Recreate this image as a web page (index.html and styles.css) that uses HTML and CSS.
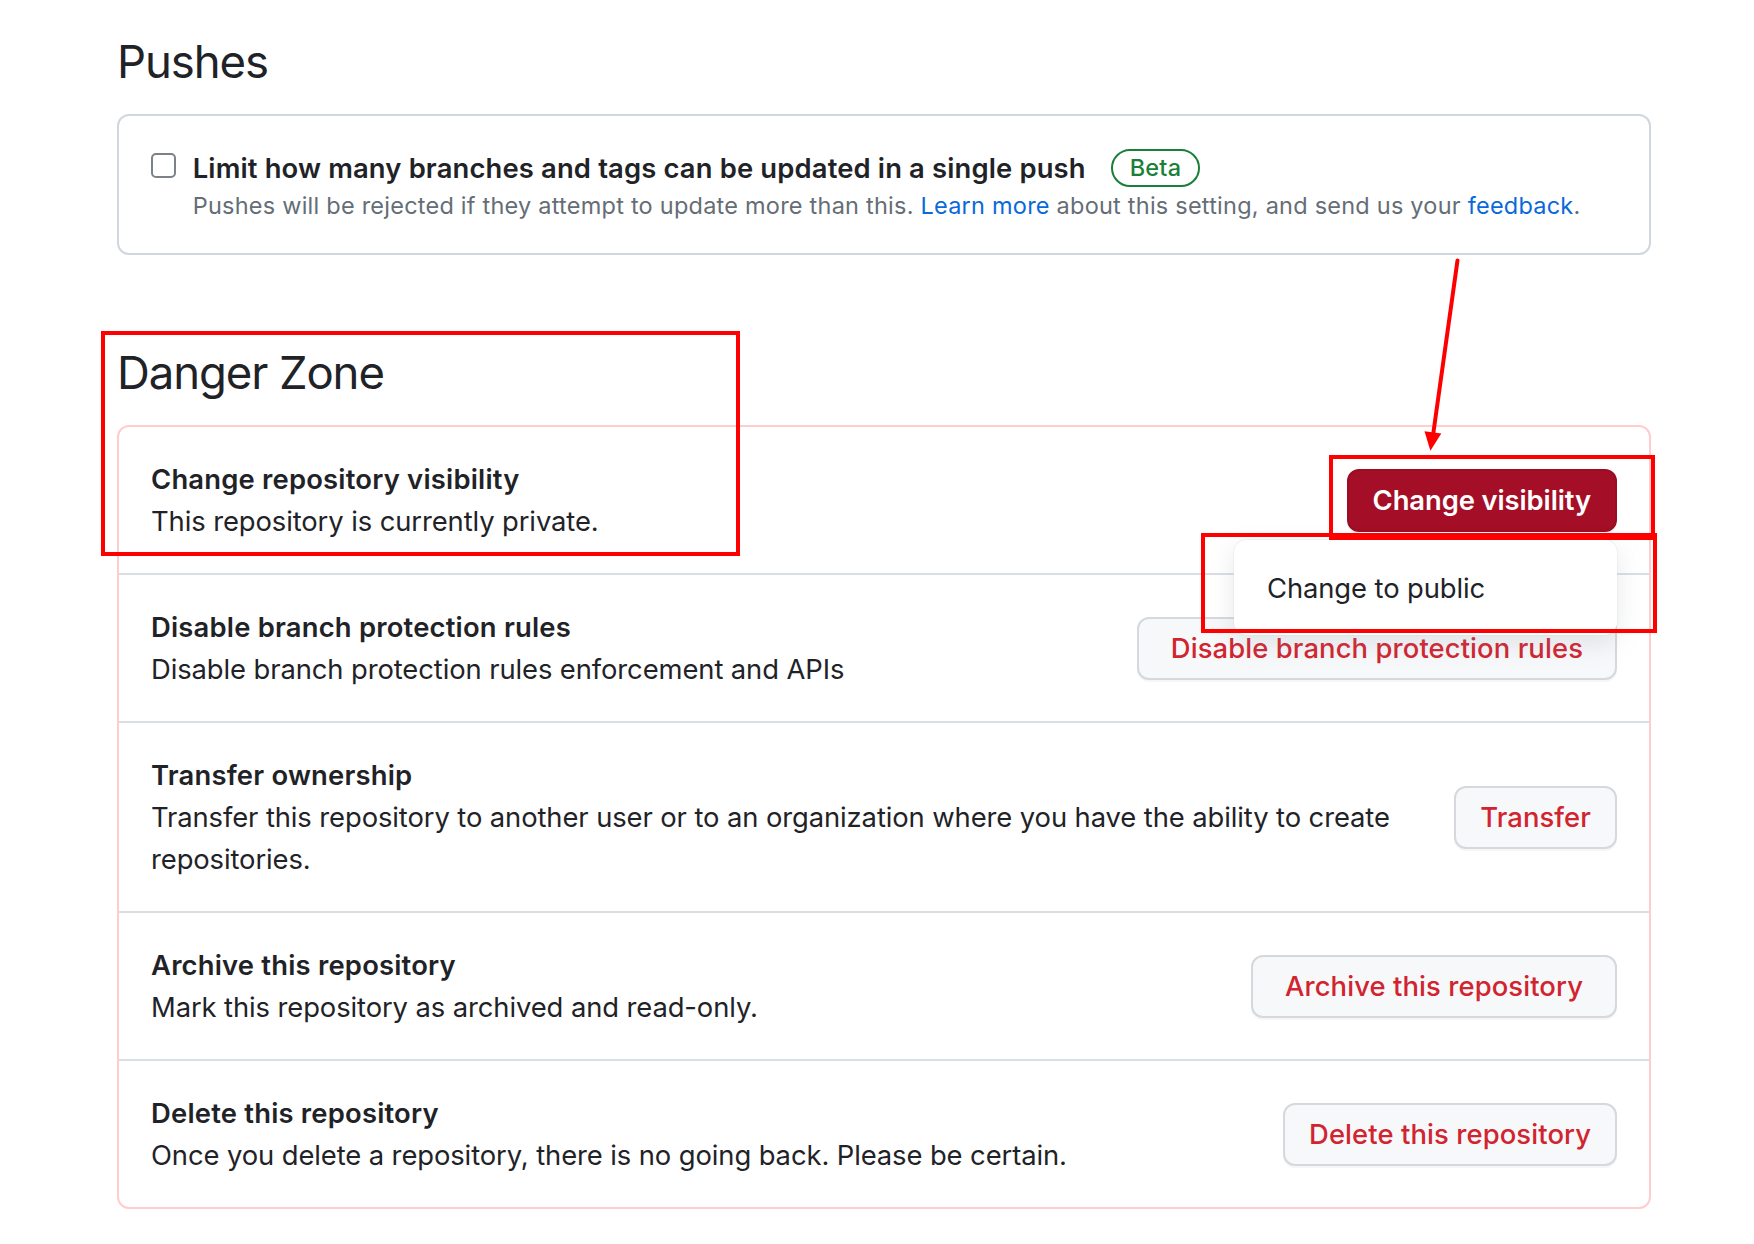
FILE: index.html
```html
<!DOCTYPE html>
<html lang="en">
<head>
<meta charset="utf-8">
<title>Repository settings – Danger Zone</title>
<link rel="stylesheet" href="styles.css">
</head>
<body>
<main class="page">
  <h2 class="subhead">Pushes</h2>
  <section class="box pushes-box">
    <span class="checkbox" role="checkbox" aria-checked="false"></span>
    <div class="check-body">
      <div class="check-title">
        <span>Limit how many branches and tags can be updated in a single push</span>
        <span class="beta">Beta</span>
      </div>
      <p class="note">Pushes will be rejected if they attempt to update more than this. <a href="#">Learn more</a> about this setting, and send us your <a href="#">feedback</a>.</p>
    </div>
  </section>

  <h2 class="subhead subhead-danger">Danger Zone</h2>
  <section class="box danger-box">
    <div class="row">
      <div class="row-text">
        <div class="row-title">Change repository visibility</div>
        <p class="row-desc">This repository is currently private.</p>
      </div>
      <div class="action">
        <button class="btn btn-emphasis">Change visibility</button>
        <div class="menu">Change to public</div>
      </div>
    </div>
    <div class="row">
      <div class="row-text">
        <div class="row-title">Disable branch protection rules</div>
        <p class="row-desc">Disable branch protection rules enforcement and APIs</p>
      </div>
      <div class="action">
        <button class="btn btn-wide">Disable branch protection rules</button>
      </div>
    </div>
    <div class="row">
      <div class="row-text">
        <div class="row-title">Transfer ownership</div>
        <p class="row-desc">Transfer this repository to another user or to an organization where you have the ability to create repositories.</p>
      </div>
      <div class="action">
        <button class="btn">Transfer</button>
      </div>
    </div>
    <div class="row">
      <div class="row-text">
        <div class="row-title">Archive this repository</div>
        <p class="row-desc">Mark this repository as archived and read-only.</p>
      </div>
      <div class="action">
        <button class="btn btn-wide">Archive this repository</button>
      </div>
    </div>
    <div class="row">
      <div class="row-text">
        <div class="row-title">Delete this repository</div>
        <p class="row-desc">Once you delete a repository, there is no going back. Please be certain.</p>
      </div>
      <div class="action">
        <button class="btn">Delete this repository</button>
      </div>
    </div>
  </section>
</main>

<div class="mark mark-heading"></div>
<div class="mark mark-button"></div>
<div class="mark mark-menu"></div>
<svg class="arrow" width="80" height="220" viewBox="1410 250 80 220" xmlns="http://www.w3.org/2000/svg">
  <line x1="1457.5" y1="260.5" x2="1433.2" y2="434" stroke="#ff0000" stroke-width="4" stroke-linecap="round"/>
  <polygon points="1430.4,450.7 1441.3,433.6 1424.5,431.2" fill="#ff0000"/>
</svg>
</body>
</html>
```
FILE: styles.css
```css
* { box-sizing: border-box; }

html, body {
  margin: 0;
  background: #ffffff;
}

body {
  font-family: Inter, "Noto Sans", "Liberation Sans", sans-serif;
  color: #1f2328;
  font-size: 27.4px;
  line-height: 42px;
  letter-spacing: -0.1px;
}

.page {
  width: 1651px;
  padding: 33px 0 40px 117px;
}

.subhead {
  margin: 0 0 22.7px;
  font-size: 45.5px;
  font-weight: 400;
  line-height: 58.6px;
  letter-spacing: -1.1px;
}

.subhead-danger {
  margin-top: 88.7px;
}

.box {
  border: 2px solid #d0d7de;
  border-radius: 12px;
  background: #fff;
}

/* Pushes */
.pushes-box {
  display: flex;
  align-items: flex-start;
  gap: 16.7px;
  padding: 31px 32px;
}

.checkbox {
  flex: none;
  width: 25px;
  height: 25px;
  margin-top: 6px;
  border: 2px solid #7d8289;
  border-radius: 5px;
  background: #fff;
}

.check-title {
  display: flex;
  align-items: center;
  height: 42px;
  font-weight: 600;
  letter-spacing: 0.15px;
}

.beta {
  display: inline-flex;
  align-items: center;
  height: 38.4px;
  margin-left: 25px;
  padding: 0 17px;
  border: 2px solid #1a7f37;
  border-radius: 999px;
  color: #1a7f37;
  font-size: 23.5px;
  font-weight: 500;
  letter-spacing: 0.2px;
}

.note {
  margin: 0;
  font-size: 23.5px;
  line-height: 33px;
  color: #656d76;
  letter-spacing: 0.23px;
}

.note a {
  color: #0969da;
  text-decoration: none;
}

/* Danger zone */
.danger-box {
  border-color: #ffcdcd;
}

.row {
  display: flex;
  align-items: center;
  gap: 48px;
  padding: 31px 32px;
  border-top: 2px solid #d8dee4;
}

.row:first-child {
  border-top: none;
}

.row-text {
  flex: 1 1 auto;
  min-width: 0;
}

.row-title {
  font-weight: 600;
  letter-spacing: 0.2px;
}

.row-desc {
  margin: 0;
}

.action {
  position: relative;
  flex: none;
}

.btn {
  display: inline-flex;
  align-items: center;
  height: 63px;
  padding: 0 24px;
  border: 2px solid #d5d8dc;
  border-radius: 12px;
  background: #f6f8fa;
  color: #d1242f;
  font-family: inherit;
  font-size: 27.4px;
  font-weight: 500;
  letter-spacing: 0.1px;
  white-space: nowrap;
  box-shadow: 0 2px 0 rgba(31, 35, 40, 0.04);
}

.btn-wide {
  padding: 0 32px;
}

.btn-emphasis {
  background: #a40e26;
  border-color: #9a0d23;
  color: #ffffff;
  font-weight: 600;
  letter-spacing: -0.1px;
}

.menu {
  position: absolute;
  top: calc(100% + 8.3px);
  right: 0;
  z-index: 2;
  width: 383px;
  padding: 27px 33px 26px;
  background: #ffffff;
  border-radius: 13px;
  white-space: nowrap;
  box-shadow: 0 0 0 1px rgba(208, 215, 222, 0.25), 0 8px 24px rgba(140, 149, 159, 0.22);
}

/* Annotation overlays */
.mark {
  position: absolute;
  z-index: 5;
  border: 4px solid #ff0000;
}

.mark-heading {
  left: 101px;
  top: 331px;
  width: 639px;
  height: 225px;
}

.mark-button {
  left: 1329px;
  top: 455px;
  width: 326px;
  height: 85px;
}

.mark-menu {
  left: 1201px;
  top: 533px;
  width: 456px;
  height: 100px;
}

.arrow {
  position: absolute;
  z-index: 5;
  left: 1410px;
  top: 250px;
}
```
